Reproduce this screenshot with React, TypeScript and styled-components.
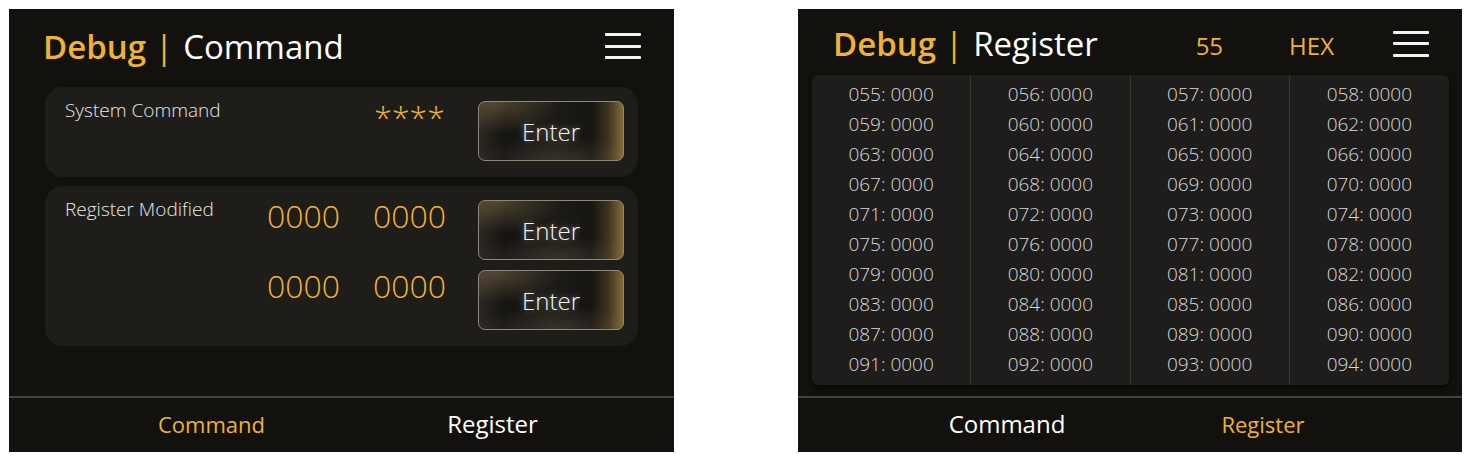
import React from "react";
import styled, { createGlobalStyle } from "styled-components";

const GlobalStyle = createGlobalStyle`
  html, body {
    margin: 0;
    padding: 0;
    background: #ffffff;
  }
  body {
    font-family: "Open Sans", "Noto Sans", sans-serif;
  }
`;

const GOLD = "#f0b232";

const Page = styled.div`
  display: flex;
  gap: 124px;
  padding: 9px;
`;

interface IPanel {
  width: number;
}
const Panel = styled.div<IPanel>`
  width: ${(props) => props.width}px;
  height: 443px;
  background: #12110e;
  display: flex;
  flex-direction: column;
`;

interface IHeader {
  height: number;
  padLeft: number;
  shift: number;
}
const Header = styled.div<IHeader>`
  height: ${(props) => props.height}px;
  padding: ${(props) => (props.shift > 0 ? props.shift : 0)}px 33px
    ${(props) => (props.shift < 0 ? -props.shift : 0)}px ${(props) => props.padLeft}px;
  display: flex;
  align-items: center;
  flex-shrink: 0;
  box-sizing: border-box;
`;

const Title = styled.div`
  font-size: 33px;
  color: #ffffff;
  white-space: nowrap;
  flex: 1;
`;

const TitleAccent = styled.span`
  color: ${GOLD};
  font-weight: 600;
`;

const TitleBar = styled.span`
  color: ${GOLD};
  margin: 0 10px 0 9px;
`;

interface IHeaderTag {
  marginRight: number;
}
const HeaderTag = styled.span<IHeaderTag>`
  color: ${GOLD};
  font-size: 24px;
  font-weight: 400;
  margin-top: 4px;
  margin-right: ${(props) => props.marginRight}px;
`;

const MenuButton = styled.div`
  width: 36px;
  height: 26px;
  display: flex;
  flex-direction: column;
  justify-content: space-between;
`;

const MenuLine = styled.span`
  display: block;
  height: 3px;
  border-radius: 1px;
  background: #f4f4f4;
`;

const Body = styled.div`
  flex: 1;
`;

const CommandBody = styled(Body)`
  display: flex;
  flex-direction: column;
  gap: 9px;
  padding: 0 36px;
`;

const Card = styled.div`
  background: #1e1d1a;
  border-radius: 18px;
  padding: 14px 14px 16px 20px;
  display: grid;
  grid-template-columns: 1fr 75px 75px 146px;
  grid-auto-rows: 60px;
  column-gap: 31px;
  row-gap: 10px;
`;

const CardLabel = styled.div`
  grid-column: 1;
  font-size: 19px;
  font-weight: 300;
  line-height: 24px;
  color: #e6e6e6;
  margin-top: -3px;
  white-space: nowrap;
`;

interface IValue {
  col: number;
}
const Value = styled.div<IValue>`
  grid-column: ${(props) => props.col};
  font-size: 32px;
  font-weight: 300;
  line-height: 32px;
  color: ${GOLD};
  text-align: center;
`;

const EnterButton = styled.button`
  grid-column: 4;
  width: 146px;
  height: 60px;
  border: 1.5px solid #8f8878;
  border-radius: 7px;
  background:
    linear-gradient(270deg, rgba(175, 140, 65, 0.7) 0%, rgba(175, 140, 65, 0.25) 10%, rgba(175, 140, 65, 0) 22%),
    radial-gradient(ellipse 45% 55% at 12% 0%, rgba(150, 128, 85, 0.45), rgba(150, 128, 85, 0) 100%),
    radial-gradient(ellipse 60% 40% at 55% 100%, rgba(120, 105, 80, 0.3), rgba(120, 105, 80, 0) 100%),
    linear-gradient(90deg, #2b2721 0%, #151412 18%, #1d1b18 50%, #151412 82%, #1f1c17 100%);
  color: #f4f4f4;
  font-family: "Open Sans", "Noto Sans", sans-serif;
  font-size: 24px;
  font-weight: 300;
  text-shadow: 0 0 6px rgba(255, 255, 255, 0.45);
  padding: 0;
  box-sizing: border-box;
`;

const RegisterBody = styled(Body)`
  padding: 0 13px 0 14px;
`;

const RegisterGrid = styled.div`
  height: 310px;
  background: #1e1d1b;
  border-radius: 6px;
  box-shadow: 0 3px 6px rgba(0, 0, 0, 0.6);
  display: grid;
  grid-template-columns: repeat(4, 1fr);
`;

const RegisterColumn = styled.div<{ last: boolean }>`
  display: flex;
  flex-direction: column;
  padding: 4px 0 6px;
  border-right: ${(props) => (props.last ? "none" : "1px solid #37352f")};
`;

const RegisterCell = styled.div`
  height: 30px;
  line-height: 30px;
  text-align: center;
  font-size: 19px;
  font-weight: 300;
  color: #d8d8d8;
  white-space: nowrap;
`;

interface INav {
  padLeft: number;
  colWidth: number;
}
const Nav = styled.div<INav>`
  height: 56px;
  flex-shrink: 0;
  border-top: 2px solid #45423d;
  display: grid;
  grid-template-columns: ${(props) => props.colWidth}px ${(props) => props.colWidth}px;
  padding-left: ${(props) => props.padLeft}px;
  align-items: center;
  box-sizing: border-box;
`;

const NavItem = styled.div<{ active: boolean }>`
  text-align: center;
  color: ${(props) => (props.active ? GOLD : "#ffffff")};
  font-size: ${(props) => (props.active ? "22px" : "24px")};
  font-weight: 400;
  margin-top: -3px;
`;

const Menu = () => (
  <MenuButton>
    <MenuLine />
    <MenuLine />
    <MenuLine />
  </MenuButton>
);

const pad3 = (n: number) => String(n).padStart(3, "0");

const CommandPanel = () => (
  <Panel width={665}>
    <Header height={78} padLeft={34} shift={-4}>
      <Title>
        <TitleAccent>Debug</TitleAccent>
        <TitleBar>|</TitleBar>Command
      </Title>
      <Menu />
    </Header>
    <CommandBody>
      <Card>
        <CardLabel>System Command</CardLabel>
        <Value col={3}>****</Value>
        <EnterButton>Enter</EnterButton>
      </Card>
      <Card>
        <CardLabel>Register Modified</CardLabel>
        <Value col={2}>0000</Value>
        <Value col={3}>0000</Value>
        <EnterButton>Enter</EnterButton>
        <Value col={2}>0000</Value>
        <Value col={3}>0000</Value>
        <EnterButton>Enter</EnterButton>
      </Card>
    </CommandBody>
    <Nav padLeft={62} colWidth={281}>
      <NavItem active={true}>Command</NavItem>
      <NavItem active={false}>Register</NavItem>
    </Nav>
  </Panel>
);

const columns = [0, 1, 2, 3].map((c) =>
  Array.from({ length: 10 }, (_, r) => 55 + r * 4 + c)
);

const RegisterPanel = () => (
  <Panel width={664}>
    <Header height={66} padLeft={35} shift={3}>
      <Title>
        <TitleAccent>Debug</TitleAccent>
        <TitleBar>|</TitleBar>Register
      </Title>
      <HeaderTag marginRight={66}>55</HeaderTag>
      <HeaderTag marginRight={59}>HEX</HeaderTag>
      <Menu />
    </Header>
    <RegisterBody>
      <RegisterGrid>
        {columns.map((col, i) => (
          <RegisterColumn key={i} last={i === 3}>
            {col.map((n) => (
              <RegisterCell key={n}>{pad3(n)}: 0000</RegisterCell>
            ))}
          </RegisterColumn>
        ))}
      </RegisterGrid>
    </RegisterBody>
    <Nav padLeft={81} colWidth={256}>
      <NavItem active={false}>Command</NavItem>
      <NavItem active={true}>Register</NavItem>
    </Nav>
  </Panel>
);

const App: React.FC = () => (
  <Page>
    <GlobalStyle />
    <CommandPanel />
    <RegisterPanel />
  </Page>
);

export default App;
